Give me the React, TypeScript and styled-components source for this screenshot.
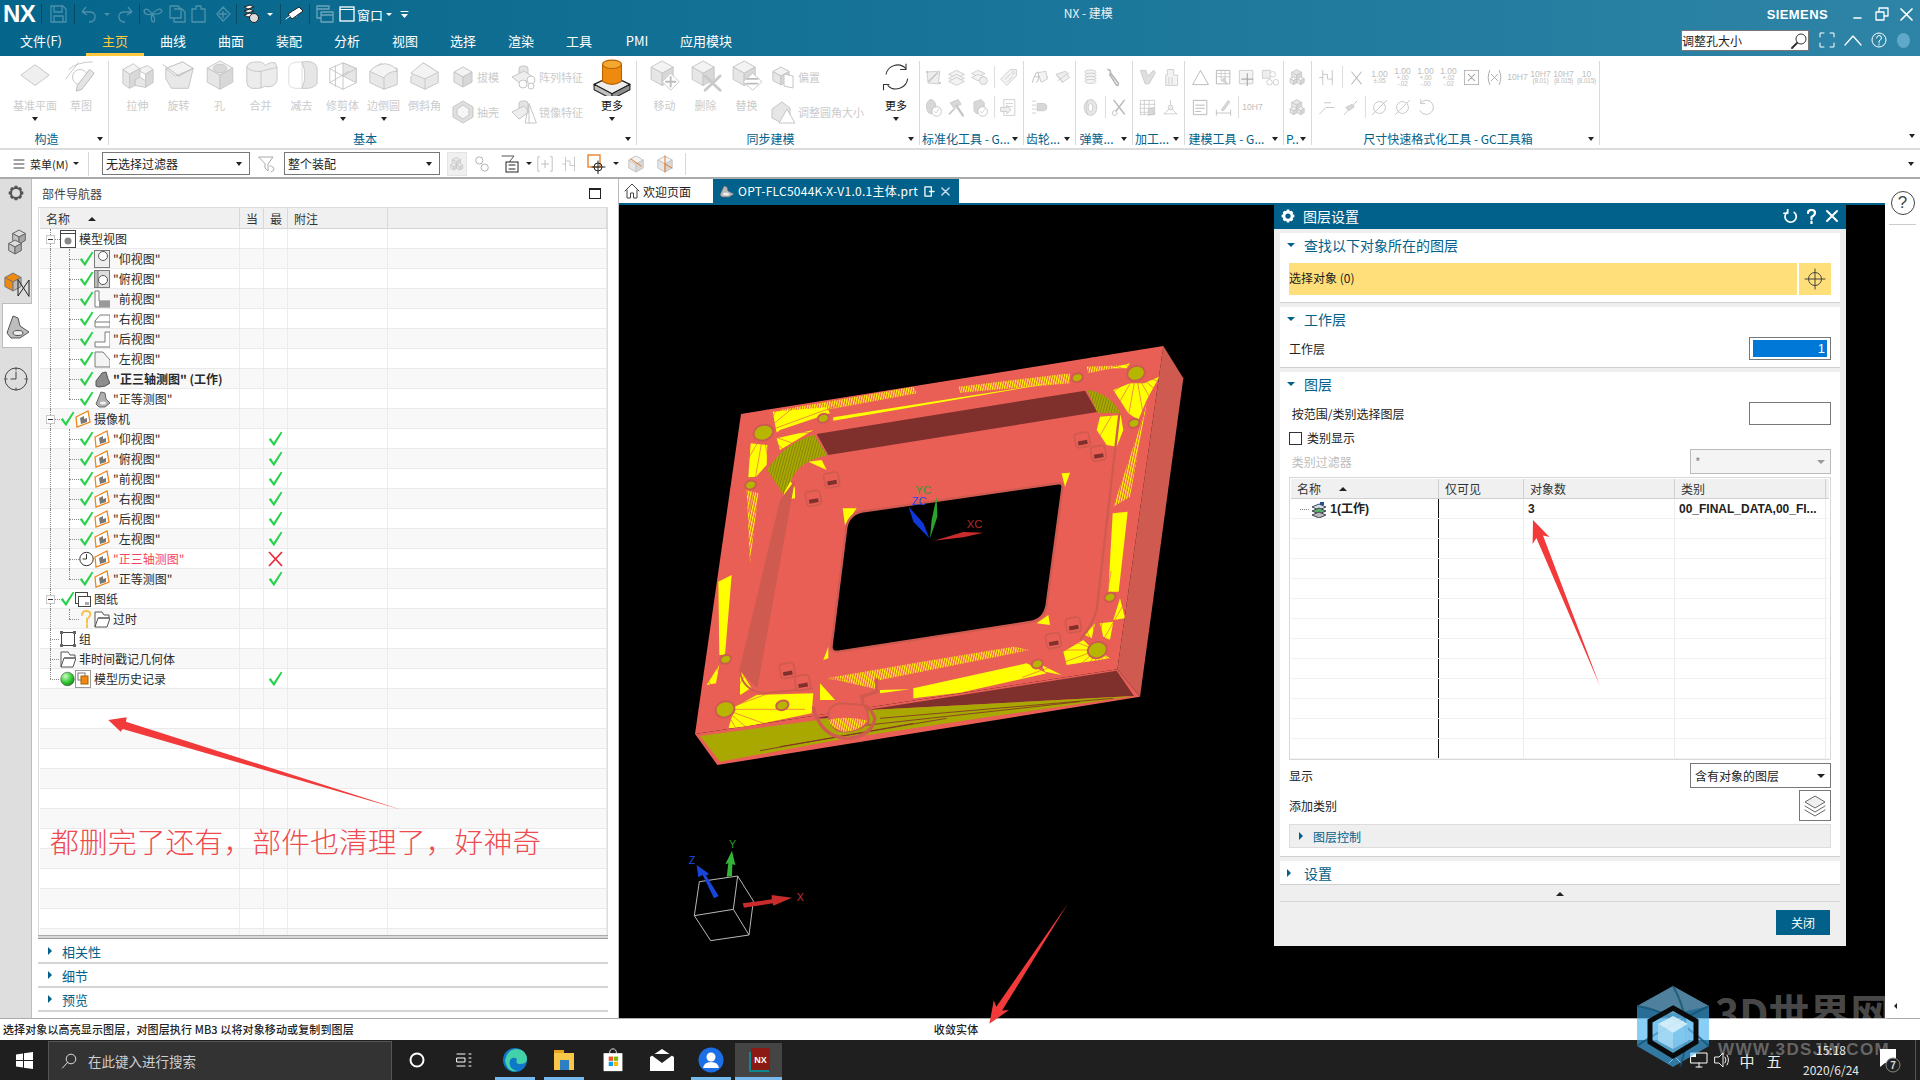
import React from "react";
import styled, { createGlobalStyle } from "styled-components";

const FONT = `"Noto Sans CJK SC", "Liberation Sans", sans-serif`;

const Global = createGlobalStyle`
  html, body { margin: 0; padding: 0; background: #fff; overflow: hidden; }
  * { box-sizing: border-box; }
  body { font-family: ${FONT}; font-size: 12px; color: #222; }
`;

/* ---------- shell ---------- */
const Page = styled.div`
  position: relative; width: 1920px; height: 1080px; overflow: hidden;
  display: flex; flex-direction: column; background: #fff;
`;
const Header = styled.header`
  height: 56px; display: flex; flex-direction: column; color: #fff;
  background: linear-gradient(90deg, #05658a 0%, #187599 50%, #2e84a6 100%);
`;
const TitleRow = styled.div`height: 28px; display: flex; align-items: center;`;
const Logo = styled.div`
  width: 41px; padding-left: 3px; font: 700 24px/28px "Liberation Sans", sans-serif; letter-spacing: -0.5px;
`;
const VSep = styled.span<{ $dark?: boolean; $h?: number }>`
  width: 1px; height: ${(p) => p.$h ?? 20}px; flex: none; background: ${(p) => (p.$dark ? "#d8d8d8" : "rgba(0,0,0,.28)")};
`;
const QBtn = styled.span<{ $w: number }>`
  width: ${(p) => p.$w}px; flex: none; display: flex; align-items: center; justify-content: center; font-size: 13px; color: #fff;
`;
const TitleText = styled.div`flex: 1; text-align: center; font-size: 12px; color: #e8f2f6; padding-bottom: 4px;`;
const Siemens = styled.div`
  font: 700 13px/28px "Liberation Sans", sans-serif; letter-spacing: .4px; margin-right: 18px; padding-top: 2px;
`;
const WinBtn = styled.span`width: 24px; display: flex; justify-content: center; align-items: center;`;
const TabRow = styled.nav`height: 28px; display: flex; align-items: stretch;`;
const FileTab = styled.div`width: 86px; padding-left: 20px; font-size: 13px; line-height: 26px;`;
const Tab = styled.div<{ $active?: boolean; $ml?: number }>`
  width: 58px; text-align: center; font-size: 13px; line-height: 26px; margin-left: ${(p) => p.$ml ?? 0}px;
  color: ${(p) => (p.$active ? "#ffc83d" : "#fff")};
  border-bottom: 3px solid ${(p) => (p.$active ? "#ffc83d" : "transparent")};
`;
const SearchBox = styled.div`
  margin: 2px 0 0 auto; width: 128px; height: 21px; background: #fff; border: 1px solid #777; color: #222;
  font-size: 12px; line-height: 19px; display: flex; justify-content: space-between; align-items: center;
`;
const HeadTools = styled.div`width: 111px; display: flex; align-items: center; padding-left: 7px; gap: 4px; margin-top: -4px;`;
const HeadTool = styled.span`width: 22px; display: flex; justify-content: center;`;
const Dot = styled.span`width: 13px; height: 15px; border-radius: 50%; background: #5ea9c8; margin-left: 3px;`;

/* ---------- ribbon ---------- */
const Ribbon = styled.section`height: 94px; padding-top: 5px; display: flex; border-bottom: 2px solid #dcdcdc; position: relative;`;
const Group = styled.div<{ $w: number }>`
  width: ${(p) => p.$w}px; height: 84px; flex: none; display: flex; flex-direction: column; border-right: 1px solid #dadada;
`;
const GroupBody = styled.div<{ $pad: number }>`flex: 1; display: flex; padding: 1px 0 0 ${(p) => p.$pad}px; min-height: 0;`;
const GroupLabel = styled.div`
  height: 18px; margin-bottom: -3px; padding: 0 5px 0 2px; display: flex; align-items: center; font-size: 12px; line-height: 18px; color: #01618a; white-space: nowrap;
`;
const LabelText = styled.span`flex: 1; min-width: 0; text-align: center; padding-right: 6px;`;
const Caret = styled.span<{ $up?: boolean; $c?: string; $s?: number }>`
  display: inline-block; flex: none; width: 0; height: 0;
  border-left: ${(p) => p.$s ?? 3.5}px solid transparent; border-right: ${(p) => p.$s ?? 3.5}px solid transparent;
  ${(p) => (p.$up ? "border-bottom" : "border-top")}: ${(p) => p.$s ?? 4}px solid ${(p) => p.$c ?? "#222"};
`;
const Big = styled.div<{ $w?: number; $dark?: boolean }>`
  width: ${(p) => p.$w ?? 41}px; flex: none; display: flex; flex-direction: column; align-items: center;
  font-size: 11px; line-height: 14px; color: ${(p) => (p.$dark ? "#111" : "#cbcbcb")}; white-space: nowrap;
`;
const BigIcon = styled.div`height: 30px; margin-bottom: 6px; display: flex; justify-content: center; align-items: center;`;
const BigCaret = styled.div`height: 14px; display: flex; align-items: center;`;
const SmallCol = styled.div<{ $w: number; $ml?: number }>`
  width: ${(p) => p.$w}px; flex: none; margin-left: ${(p) => p.$ml ?? 0}px; display: flex; flex-direction: column; gap: 5px;
`;
const SmallItem = styled.div`
  height: 30px; display: flex; align-items: center; gap: 2px; font-size: 11px; color: #cbcbcb; white-space: nowrap;
`;
const MiniGrid = styled.div`display: flex; flex-direction: column;`;
const MiniRow = styled.div`height: 30px; display: flex; align-items: center;`;
const MiniCell = styled.span`width: 23px; flex: none; display: flex; justify-content: center; align-items: center;`;
const MiniSep = styled.span`width: 6px; height: 22px; flex: none; display: flex; justify-content: center; &::after { content: ""; width: 1px; background: #ddd; }`;
const MiniText = styled.span`
  font: 8.5px/8px "Liberation Sans", sans-serif; color: #bdbdbd; text-align: center; white-space: nowrap; display: block; width: 23px;
`;
const MiniSub = styled.span`display: block; font-size: 6.5px; line-height: 6.5px; letter-spacing: -.2px;`;
const RibbonEnd = styled.div`margin-left: auto; align-self: flex-end; padding: 0 5px 7px 0;`;

/* ---------- toolbar ---------- */
const Toolbar = styled.div`
  height: 29px; flex: none; display: flex; align-items: center; border-bottom: 2px solid #aaa; padding-left: 13px; position: relative;
`;
const MenuBtn = styled.div`display: flex; align-items: center; gap: 5px; font-size: 11px; color: #222; width: 75px;`;
const ToolSelect = styled.div<{ $w: number }>`
  width: ${(p) => p.$w}px; height: 23px; border: 1px solid #777; display: flex; align-items: center; justify-content: space-between;
  padding: 0 7px 0 3px; font-size: 12px; color: #222; flex: none;
`;
const ToolIcon = styled.span<{ $w: number; $box?: boolean }>`
  width: ${(p) => p.$w}px; height: 24px; flex: none; display: flex; align-items: center; justify-content: center;
  ${(p) => p.$box && "background:#f0f0f0;border:1px solid #e4e4e4;"}
`;

/* ---------- main ---------- */
const Main = styled.main`flex: 1; display: flex; min-height: 0;`;
const Rail = styled.aside`
  width: 32px; flex: none; background: #dedede; border-right: 1px solid #bdbdbd; display: flex; flex-direction: column; align-items: center; padding-top: 2px;
`;
const RailBtn = styled.div<{ $h: number; $active?: boolean }>`
  height: ${(p) => p.$h}px; width: 100%; flex: none; display: flex; align-items: center; justify-content: center;
  ${(p) => p.$active && "background:#fff;border:1px solid #bdbdbd;border-right:0;margin:-2px -1px 0 2px;width:30px;"}
`;
const NavPanel = styled.section`width: 583px; flex: none; display: flex; flex-direction: column; background: #fff;`;
const NavTitle = styled.div`
  height: 28px; flex: none; display: flex; align-items: center; justify-content: space-between; padding: 0 14px 0 10px; font-size: 12px; color: #444;
`;
const MaxBox = styled.span`width: 12px; height: 11px; border: 1.5px solid #222; border-top-width: 2px;`;
const NavTable = styled.div`
  margin-left: 6px; width: 570px; height: 728px; flex: none; border: 1px solid #dcdcdc; border-bottom: 0; padding-left: 1px; overflow: hidden; background: #fff;
`;
const HeadRow = styled.div`
  height: 21px; display: flex; background: #f0f0f0; border-bottom: 1px solid #d6d6d6; font-size: 12px; color: #333;
`;
const HeadCell = styled.div<{ $w?: number }>`
  ${(p) => (p.$w ? `width:${p.$w}px;flex:none;` : "flex:1;")} border-right: 1px solid #d8d8d8; line-height: 20px; padding: 1px 0 0 6px;
  display: flex; align-items: center; gap: 18px;
`;
const Row = styled.div<{ $zebra: boolean }>`
  height: 20px; display: flex; border-bottom: 1px solid #eaeaea; background: ${(p) => (p.$zebra ? "#f8f8f8" : "#fff")};
`;
const Cell = styled.div<{ $w?: number }>`
  ${(p) => (p.$w ? `width:${p.$w}px;flex:none;` : "flex:1;")} border-right: 1px solid #ececec; display: flex; align-items: center; justify-content: center; height: 100%;
`;
const NameCell = styled.div<{ $pad: number }>`
  width: 200px; flex: none; height: 100%; border-right: 1px solid #ececec; position: relative; display: flex; align-items: center; padding-left: ${(p) => p.$pad}px;
`;
const NodeText = styled.span<{ $bold?: boolean; $red?: boolean }>`
  margin-left: 3px; font-size: 12px; line-height: 18px; white-space: nowrap; color: ${(p) => (p.$red ? "#f5455a" : "#2a2a2a")};
  font-weight: ${(p) => (p.$bold ? 700 : 400)};
`;
const VGuide = styled.span<{ $x: number; $half?: boolean }>`
  position: absolute; left: ${(p) => p.$x}px; top: 0; ${(p) => (p.$half ? "height:50%;" : "bottom:-1px;")} border-left: 1px dotted #8a8a8a;
`;
const HGuide = styled.span<{ $x: number; $w: number }>`
  position: absolute; left: ${(p) => p.$x}px; top: 50%; width: ${(p) => p.$w}px; border-top: 1px dotted #8a8a8a;
`;
const Expander = styled.span`
  position: absolute; left: 6px; top: 6px; width: 9px; height: 9px; background: #fff; border: 1px solid #c8c8c8;
  &::after { content: ""; position: absolute; left: 1px; top: 3px; width: 5px; height: 1px; background: #333; }
`;
const ThickLine = styled.div`margin: 0 0 1px 6px; width: 570px; height: 4px; flex: none; background: #d8d8d8; border-bottom: 1px solid #999; border-top: 1px solid #aaa;`;
const Fold = styled.div<{ $h: number }>`
  margin-left: 6px; width: 570px; height: ${(p) => p.$h}px; flex: none; display: flex; align-items: center; gap: 10px; padding-left: 10px;
  border-bottom: 2px solid #d4d4d4; font-size: 13px; color: #01618a;
`;
const RightCaret = styled.span`
  width: 0; height: 0; flex: none; border-top: 4px solid transparent; border-bottom: 4px solid transparent; border-left: 4px solid #01618a;
`;
const CenterPane = styled.section`
  width: 1267px; flex: none; position: relative; display: flex; flex-direction: column; margin-left: 3px; border-left: 1px solid #bcbcbc;
`;
const FileTabs = styled.div`height: 24px; flex: none; display: flex; background: #fff;`;
const Welcome = styled.div`width: 94px; display: flex; align-items: center; gap: 3px; padding-left: 5px; font-size: 12px; color: #222;`;
const PartTab = styled.div`
  width: 246px; background: #01618a; color: #fff; display: flex; align-items: center; gap: 3px; padding-left: 6px; font: 12px/24px ${FONT}; letter-spacing: .27px; white-space: nowrap;
`;
const TabGlyph = styled.span`margin-left: 3px; display: flex; flex: none;`;
const CanvasArea = styled.div`flex: 1; background: #000; border-top: 2px solid #01618a; position: relative; overflow: hidden;`;
const Drawing = styled.svg<{ $x: number; $y: number; $w: number; $h: number }>`
  position: absolute; left: ${(p) => p.$x}px; top: ${(p) => p.$y}px; width: ${(p) => p.$w}px; height: ${(p) => p.$h}px;
`;
const RightStrip = styled.aside`flex: 1; background: #fff; position: relative; display: flex; flex-direction: column; align-items: center; padding-top: 12px;`;
const HelpBtn = styled.div`
  width: 24px; height: 24px; border: 1.3px solid #444; border-radius: 50%; font: 17px/22px "Liberation Sans", sans-serif; text-align: center; color: #444;
`;
const HelpRule = styled.div`width: 27px; height: 1px; background: #ccc; margin-top: 9px;`;
const StripArrow = styled.span`
  position: absolute; left: 9px; bottom: 9px; width: 0; height: 0; border-top: 3px solid transparent; border-bottom: 3px solid transparent; border-right: 3px solid #222;
`;

/* ---------- dialog ---------- */
const Dialog = styled.div`
  position: absolute; left: 655px; top: 24px; width: 572px; height: 743px; background: #efefef; display: flex; flex-direction: column;
`;
const DlgTitle = styled.div`
  height: 26px; flex: none; background: #01618a; color: #fff; display: flex; align-items: center; padding: 0 7px; gap: 8px; font-size: 14px;
`;
const DlgTitleText = styled.span`flex: 1;`;
const DlgBody = styled.div`flex: 1; padding: 4px 6px 0; display: flex; flex-direction: column; gap: 4px;`;
const Section = styled.div<{ $h: number }>`
  height: ${(p) => p.$h}px; flex: none; background: #fff; border-bottom: 1.5px solid #d0d0d0; padding: 0 9px; display: flex; flex-direction: column;
`;
const SecHead = styled.div<{ $gap?: number }>`
  height: 26px; flex: none; display: flex; align-items: center; gap: ${(p) => p.$gap ?? 9}px; margin-left: -2px; padding-bottom: 2px; font-size: 14px; color: #01618a;
`;
const DlgLine = styled.div<{ $h: number; $mt?: number; $muted?: boolean }>`
  height: ${(p) => p.$h}px; flex: none; margin-top: ${(p) => p.$mt ?? 0}px; display: flex; align-items: center; justify-content: space-between;
  font-size: 12px; color: ${(p) => (p.$muted ? "#bdbdbd" : "#222")};
`;
const SelectBar = styled.div`
  margin-top: 4px; height: 32px; display: flex; gap: 2px; font-size: 12px; color: #222;
`;
const YellowLabel = styled.div`flex: 1; background: #fedf79; line-height: 30px;`;
const YellowBtn = styled.div`width: 32px; background: #fedf79; display: flex; align-items: center; justify-content: center;`;
const NumBox = styled.div<{ $sel?: boolean }>`
  width: 82px; height: 23px; border: 1px solid #777; padding: 2px 3px; background: #fff; display: flex;
`;
const NumFill = styled.div`
  flex: 1; background: #0078d7; color: #fff; text-align: right; padding-right: 2px; font: 13px/17px "Liberation Sans", sans-serif;
`;
const Check = styled.span`display: inline-block; width: 13px; height: 13px; border: 1px solid #333; background: #fff; margin-right: 5px; vertical-align: -2px;`;
const DropBox = styled.div<{ $off?: boolean }>`
  width: 141px; height: 25px; border: 1px solid ${(p) => (p.$off ? "#bbb" : "#777")}; background: ${(p) => (p.$off ? "#f4f4f4" : "#fff")};
  display: flex; align-items: center; justify-content: space-between; padding: 0 5px 0 4px; font-size: 12px; color: ${(p) => (p.$off ? "#888" : "#222")};
`;
const LayerBtn = styled.div`width: 32px; height: 31px; border: 1px solid #777; display: flex; align-items: center; justify-content: center;`;
const LayerTable = styled.div`
  margin-top: 3px; height: 283px; flex: none; border: 1px solid #d8d8d8; padding: 1px; overflow: hidden; background: #fff;
`;
const LHead = styled.div`height: 20px; display: flex; background: #f0f0f0; border-bottom: 1px solid #d0d0d0; font-size: 12px; color: #333;`;
const LHeadCell = styled.div<{ $w: number }>`
  width: ${(p) => p.$w}px; flex: none; border-right: 1px solid #d0d0d0; padding-left: 6px; line-height: 20px; display: flex; align-items: center; gap: 18px;
`;
const LRow = styled.div`height: 20px; display: flex; border-bottom: 1px solid #f2f2f2; font: 700 12px/19px "Liberation Sans", ${FONT}; color: #222;`;
const LCell = styled.div<{ $w: number; $black?: boolean }>`
  width: ${(p) => p.$w}px; flex: none; border-right: 1px solid ${(p) => (p.$black ? "#111" : "#ececec")}; padding: 2px 0 0 4px; white-space: nowrap; overflow: hidden; display: flex; align-items: center;
`;
const SubBar = styled.div`
  margin-top: 3px; height: 24px; flex: none; background: #efefef; border: 1px solid #dcdcdc; display: flex; align-items: center; gap: 10px; padding-left: 9px; font-size: 12px; color: #01618a;
`;
const FoldLine = styled.div`height: 16px; flex: none; display: flex; align-items: center; justify-content: center; border-bottom: 1.5px solid #d8d8d8; margin-top: -3px;`;
const DlgFoot = styled.div`display: flex; justify-content: flex-end; padding: 4px 10px 0 0;`;
const CloseBtn = styled.div`width: 54px; height: 25px; background: #01618a; color: #fff; font-size: 12px; line-height: 25px; text-align: center;`;
const GuideStub = styled.span`width: 9px; margin: 0 2px 0 5px; border-top: 1px dotted #888; flex: none;`;

/* ---------- bottom ---------- */
const StatusBar = styled.div`
  height: 22px; flex: none; border-top: 1px solid #aaa; display: flex; align-items: center; padding: 0 0 2px 3px; font-size: 11px; letter-spacing: .12px; color: #222; background: #fff; font-weight: 500;
`;
const StatusRight = styled.span`position: relative; left: 580px;`;
const Taskbar = styled.footer`height: 40px; flex: none; background: #1f1f1f; display: flex; align-items: stretch; color: #fff;`;
const StartBtn = styled.div`width: 48px; display: flex; align-items: center; justify-content: center;`;
const TaskSearch = styled.div`
  width: 344px; margin-top: 1px; background: #333; border: 1px solid #555; border-bottom: 0; display: flex; align-items: center; gap: 11px; padding-left: 12px; font-size: 13.5px; color: #cfcfcf;
`;
const TaskBtn = styled.div<{ $w: number; $on?: boolean; $lit?: boolean }>`
  width: ${(p) => p.$w}px; flex: none; display: flex; align-items: center; justify-content: center;
  border-bottom: 3px solid ${(p) => (p.$on ? "#76b9ed" : "transparent")}; border-top: 3px solid transparent; background: ${(p) => (p.$lit ? "#444" : "transparent")};
  background-clip: padding-box;
`;
const Tray = styled.div`margin-left: auto; display: flex; align-items: center;`;
const TrayBtn = styled.span<{ $w: number }>`width: ${(p) => p.$w}px; display: flex; justify-content: center; align-items: center; font-size: 15px; color: #eee;`;
const Clock = styled.div`width: 84px; text-align: center; font-size: 12px; line-height: 20px; color: #e6e6e6;`;
const NotifyBtn = styled.span`width: 42px; padding-right: 10px; display: flex; justify-content: center;`;
const DesktopEdge = styled.span`width: 5px; height: 100%; border-left: 1px solid #555;`;

/* ---------- overlays ---------- */
const Overlay = styled.svg`position: absolute; left: 0; top: 0; width: 1920px; height: 1080px; pointer-events: none;`;
const Note = styled.div`
  position: absolute; left: 50px; top: 821px; font-size: 28.8px; line-height: 40px; font-weight: 300; color: #ee4a50; white-space: nowrap; letter-spacing: .1px;
`;
const MarkText = styled.div`
  position: absolute; left: 1715px; top: 986px; font: 700 41px/50px ${FONT}; color: rgba(255, 255, 255, .3); white-space: nowrap; pointer-events: none;
`;
const MarkUrl = styled.div`
  position: absolute; left: 1718px; top: 1040px; font: 700 17px/20px "Liberation Sans", sans-serif; letter-spacing: 1.4px; color: rgba(255, 255, 255, .32); white-space: nowrap;
`;

/* ---------- svg helpers ---------- */
const Ic = styled.svg<{ $w: number; $h?: number }>`display: block; flex: none; width: ${(p) => p.$w}px; height: ${(p) => p.$h ?? p.$w}px;`;
const A = "#f3f3f3", B = "#e6e6e6", C = "#d8d8d8", L = "#c6c6c6";
const Poly = ({ p, f = B, s = L, w = 1 }: { p: string; f?: string; s?: string; w?: number }) => <polygon points={p} fill={f} stroke={s} strokeWidth={w} strokeLinejoin="round" />;
const Ln = ({ d, s = L, w = 1 }: { d: string; s?: string; w?: number }) => <path d={d} fill="none" stroke={s} strokeWidth={w} strokeLinecap="round" strokeLinejoin="round" />;
const Cube = ({ x, y, r, top = A, left = B, right = C, line = L }: { x: number; y: number; r: number; top?: string; left?: string; right?: string; line?: string }) => (
  <>
    <Poly p={`${x},${y - r} ${x + r * .9},${y - r / 2} ${x},${y} ${x - r * .9},${y - r / 2}`} f={top} s={line} />
    <Poly p={`${x - r * .9},${y - r / 2} ${x},${y} ${x},${y + r} ${x - r * .9},${y + r / 2}`} f={left} s={line} />
    <Poly p={`${x + r * .9},${y - r / 2} ${x},${y} ${x},${y + r} ${x + r * .9},${y + r / 2}`} f={right} s={line} />
  </>
);

const bigIcons: Record<string, React.ReactNode> = {
  plane: <Poly p="18,5 33,16 18,27 3,16" f="#efefef" />,
  sketch: <>
    <Ln d="M2 20 L15 3 M5 10 Q14 2 30 2" />
    <circle cx="17" cy="18" r="8" fill="#fff" stroke={L} />
    <Poly p="27,10 32,14 19,31 13,33 14,27" f="#e4e4e4" s="#b9b9b9" />
  </>,
  extrude: <>
    <Poly p="2,10 13,4 20,9 9,15" f={A} /><Poly p="20,9 28,6 34,10 26,15 20,12" f={A} />
    <Poly p="2,10 9,15 9,30 2,25" f={B} /><Poly p="9,15 20,9 20,18 15,21 15,27 9,30" f={C} />
    <Poly p="26,15 34,10 34,24 26,29" f={C} /><Poly p="15,21 20,18 26,22 26,29 15,27" f={B} />
  </>,
  revolve: <>
    <Poly p="4,9 22,2 33,9 28,30 10,30 4,20" f="#e8e8e8" />
    <Poly p="4,9 22,2 33,9 14,17" f={A} />
    <Ln d="M1 5 L18 17 M18 17 Q30 10 33 9" s="#bbb" />
  </>,
  hole: <>
    <Cube x={18} y={16} r={15} />
    <ellipse cx="18" cy="9" rx="7" ry="4.5" fill="#d9d9d9" stroke={L} />
  </>,
  unite: <>
    <path d="M3 8 Q3 2 14 2 Q21 2 23 6 Q26 2 33 3 Q35 6 35 10 L35 22 Q32 30 22 28 Q16 31 8 30 Q3 28 3 24 Z" fill="#ececec" stroke={L} />
    <Ln d="M3 8 Q8 13 18 12 Q25 10 35 8 M18 12 L18 30" />
  </>,
  subtract: <>
    <path d="M4 8 Q4 2 18 2 L18 30 Q6 31 4 26 Z" fill="#fff" stroke="#dcdcdc" />
    <path d="M18 2 Q32 0 34 8 L34 25 Q30 31 18 30 Q24 16 18 2 Z" fill="#e6e6e6" stroke={L} />
  </>,
  trim: <>
    <Poly p="4,9 18,3 32,9 32,24 18,31 4,24" f="#fff" />
    <Poly p="18,3 32,9 32,24 18,17" f="#e6e6e6" />
    <Ln d="M4 9 L18 17 L18 31 M18 17 L32 9 M10 6 L10 28 M4 24 L24 12" />
  </>,
  blend: <>
    <Poly p="3,12 14,4 32,9 32,26 18,31 3,24" f="#e8e8e8" />
    <path d="M3 12 Q10 4 20 4 Q30 6 32 12 Q22 12 18 19 Z" fill="#f4f4f4" stroke={L} />
    <Ln d="M18 19 L18 31" />
  </>,
  chamfer: <>
    <Poly p="3,18 16,3 32,13 32,24 18,31 3,24" f="#e8e8e8" />
    <Poly p="3,14 16,3 32,13 18,20" f="#f3f3f3" />
    <Ln d="M18 20 L18 31" />
  </>,
  move: <>
    <Cube x={15} y={14} r={13} />
    <Poly p="24,14 33,23 24,32 15,23" f="#fff" s="#c8c8c8" />
    <Ln d="M24 18 L24 28 M19 23 L29 23" s="#bdbdbd" w={2} />
  </>,
  del: <>
    <Cube x={15} y={14} r={13} />
    <Ln d="M17 17 L33 32 M33 17 L17 32" s="#c9c9c9" w={3} />
  </>,
  replace: <>
    <Cube x={15} y={14} r={13} />
    <Poly p="24,14 34,23 24,32 14,23" f="#fff" s="#c8c8c8" />
    <Ln d="M18 25 L29 25 M29 20 L18 20" s="#bdbdbd" w={2} />
  </>,
  more: <>
    <Poly p="18,17 35,25 18,34 1,25" f="#eeeeee" s="#222" w={1.2} />
    <Poly p="1,25 18,34 18,39 1,30" f="#bfbfbf" s="#222" />
    <Poly p="35,25 18,34 18,39 35,30" f="#8e8e8e" s="#222" />
    <path d="M9 6 L9 22 Q18 28 27 22 L27 6 Z" fill="#ef8a10" stroke="#b86200" />
    <ellipse cx="18" cy="6" rx="9" ry="4" fill="#f5a830" stroke="#b86200" />
  </>,
  sync: <>
    <path d="M6 15 A14 14 0 0 1 30 8" fill="none" stroke="#333" strokeWidth="1.3" />
    <path d="M32 20 A14 14 0 0 1 8 28" fill="none" stroke="#333" strokeWidth="1.3" />
    <path d="M30 2 V9 H23" fill="none" stroke="#333" strokeWidth="1.3" />
    <path d="M3 34 V27 H10" fill="none" stroke="#333" strokeWidth="1.3" />
  </>,
};
const BigI = ({ n, s = 34 }: { n: string; s?: number }) => <Ic $w={s} viewBox="0 0 36 36">{bigIcons[n]}</Ic>;

const miniIcons: Record<string, React.ReactNode> = {
  draft: <><Poly p="4,5 20,4 18,20 5,19" f="#eee" /><Ln d="M6 17 L17 6" w={2} /><circle cx="4" cy="5" r="1.5" fill="#ccc" /><circle cx="20" cy="19" r="1.5" fill="#ccc" /></>,
  layers: <><Poly p="12,3 22,8 12,13 2,8" f={A} /><Poly p="12,8 22,13 12,18 2,13" f={A} /><Poly p="12,12 22,17 12,22 2,17" f={A} /></>,
  layg: <><Poly p="10,3 19,7 10,11 2,7" f={A} /><Poly p="10,8 19,12 10,16 2,12" f={A} /><circle cx="17" cy="16" r="5" fill="#eee" stroke={L} /></>,
  tag: <><Poly p="14,2 22,2 22,10 10,22 2,14" f={A} /><circle cx="18" cy="6" r="1.5" fill="#fff" stroke={L} /><Ln d="M8 14 L14 8 M11 17 L17 11" /></>,
  spool: <><ellipse cx="9" cy="11" rx="6" ry="9" fill={C} stroke={L} /><circle cx="16" cy="17" r="6" fill="#fff" stroke="#bbb" /><Ln d="M13 17 L15 19 L19 14" /></>,
  hammer: <><Poly p="4,6 14,2 18,8 8,12" f={C} /><Ln d="M12 10 L20 22" w={3} /><Ln d="M3 20 L10 13" w={2} /></>,
  barrel: <><Poly p="5,5 14,2 18,6 18,16 8,20 5,16" f={C} /><circle cx="16" cy="17" r="6" fill="#fff" stroke="#bbb" /><Ln d="M13 17 L15 19 L19 14" /></>,
  sheet: <><Poly p="6,2 20,2 20,22 6,22" f="#fff" /><Ln d="M9 7 L17 7 M9 11 L17 11" /><Poly p="2,12 10,12 10,9 15,15 10,20 10,17 2,17" f="#eee" /></>,
  ribbon: <><Ln d="M3 18 Q8 2 11 6 Q11 18 8 18 M6 11 L22 11" w={1.3} /><Poly p="10,6 20,4 22,14 14,18" f={A} /></>,
  gear2: <><Poly p="4,8 16,4 21,12 12,18" f="#eee" /><Ln d="M6 16 L20 6 M4 8 L12 18" /></>,
  rack: <><Ln d="M3 4 H7 M3 9 H7 M3 14 H7 M3 19 H7" /><Poly p="9,7 18,7 21,9 21,14 18,16 9,16" f={C} /></>,
  coil: <><ellipse cx="12" cy="5" rx="7" ry="2.5" fill={A} stroke={L} /><ellipse cx="12" cy="9" rx="7" ry="2.5" fill={A} stroke={L} /><ellipse cx="12" cy="13" rx="7" ry="2.5" fill={A} stroke={L} /><ellipse cx="12" cy="17" rx="7" ry="2.5" fill={A} stroke={L} /></>,
  spring: <Ln d="M5 2 Q9 3 8 6 L18 19 Q19 22 16 22 L7 8" s="#b5b5b5" w={2} />,
  ring: <><ellipse cx="12" cy="12" rx="8" ry="10" fill={B} stroke={L} /><ellipse cx="12" cy="12" rx="3" ry="5" fill="#fff" stroke={L} /><Ln d="M8 3 Q5 12 8 21" /></>,
  scissor: <><Ln d="M5 3 L18 20 M18 3 L5 20" s="#bbb" w={2} /><circle cx="6" cy="19" r="3" fill="#fff" stroke="#bbb" /></>,
  mill: <><Poly p="3,3 10,3 12,10 20,3 22,6 14,20 9,20" f="#dedede" /></>,
  stack: <><Poly p="8,2 16,2 16,9 21,9 21,22 6,22 6,9 8,9" f={A} /><Ln d="M10 12 L10 20 M14 12 L14 20" /></>,
  table: <><Poly p="3,3 21,3 21,21 3,21" f="#fff" /><Ln d="M3 8 H21 M3 13 H21 M3 18 H21 M8 3 V21 M14 3 V21" /><Poly p="13,14 19,12 21,20 13,22" f={C} /></>,
  axis: <><Ln d="M12 3 V12 L4 20 M12 12 L20 20 M4 20 H20" /><circle cx="12" cy="12" r="3" fill="#eee" stroke={L} /></>,
  tri: <Poly p="12,3 22,21 2,21" f="#fff" s="#aaa" />,
  tablet: <><Poly p="3,3 20,3 20,20 3,20" f="#fff" s="#aaa" /><Ln d="M3 7 H20 M3 11 H20 M9 3 V15 M14 3 V15" /><Poly p="9,16 13,12 16,19" f={C} /></>,
  plus: <><Poly p="3,3 20,3 20,20 3,20" f="#f4f4f4" /><Ln d="M6 14 H20 M13 7 V22" s="#aaa" w={1.5} /></>,
  nodes: <><Poly p="3,3 13,3 13,13 3,13" f="#eee" /><circle cx="16" cy="8" r="3.5" fill="#fff" stroke={L} /><circle cx="12" cy="18" r="3.5" fill="#fff" stroke={L} /><circle cx="20" cy="18" r="3.5" fill="#fff" stroke={L} /></>,
  note: <><Poly p="3,3 20,3 20,21 3,21" f="#fff" s="#aaa" /><Ln d="M6 9 H17 M6 13 H17 M6 17 H12" s="#aaa" /></>,
  pen: <><Ln d="M3 15 V22 M21 15 V22 M3 19 H21" s="#bbb" /><Poly p="9,15 18,3 20,5 12,16" f={C} /></>,
  blocks: <><Cube x={11} y={9} r={7} top="#e6e6e6" /><Cube x={7} y={16} r={5} /><Cube x={16} y={16} r={5} /></>,
  dim1: <><Ln d="M6 3 V21 M18 3 V21 M6 8 H12 V14 H18 M2 12 H6" s="#bbb" /></>,
  cross: <Ln d="M6 5 L18 20 M18 5 L6 20" s="#bbb" w={1.3} />,
  boxX: <><rect x="3" y="3" width="18" height="18" fill="#fff" stroke="#aaa" /><Ln d="M8 8 L16 16 M16 8 L8 16" s="#aaa" w={1.3} /></>,
  parX: <><Ln d="M6 3 Q2 12 6 21 M18 3 Q22 12 18 21 M8 8 L16 16 M16 8 L8 16" s="#aaa" w={1.2} /></>,
  arrow: <><Ln d="M2 20 L10 12 H20 M8 6 H16" s="#bbb" /></>,
  slant: <><Ln d="M4 21 L20 4" s="#bbb" /><Poly p="6,12 14,8 17,11 10,16" f={C} /></>,
  dia: <><circle cx="12" cy="12" r="7.5" fill="#fff" stroke="#bbb" /><Ln d="M3 21 L21 3" s="#bbb" /></>,
  rot: <><Ln d="M6 6 A9 9 0 1 1 5 16 M6 2 V7 H11" s="#bbb" /></>,
};
const Mini = ({ n, s = 19 }: { n: string; s?: number }) => <Ic $w={s} viewBox="0 0 24 24">{miniIcons[n]}</Ic>;
const Mt = ({ t }: { t: string }) => {
  const [head, ...rest] = t.split("|");
  return <MiniText>{head}{rest.map((r) => <MiniSub key={r}>{r}</MiniSub>)}</MiniText>;
};
const Cells = ({ items }: { items: (string | null)[] }) => (
  <MiniRow>
    {items.map((n, i) =>
      n === null ? <MiniSep key={i} /> :
      n.startsWith("t:") ? <MiniCell key={i}><Mt t={n.slice(2)} /></MiniCell> :
      <MiniCell key={i}><Mini n={n} /></MiniCell>
    )}
  </MiniRow>
);

/* ---------- tree icons ---------- */
const Tick = ({ s = 15 }: { s?: number }) => (
  <Ic $w={s} $h={16} viewBox="0 0 15 16"><path d="M.8 8.5 L2.8 7 L5.6 11.6 L12.8 .8 L14.4 1.6 L6 15.2 Z" fill="#26d24a" /></Ic>
);
const Cross = () => <Ic $w={15} $h={16} viewBox="0 0 15 16"><path d="M1 1 L14 15 M14 1 L1 15" stroke="#ee2b3c" strokeWidth="1.8" /></Ic>;
const Tk = "#7a7a7a";
const treeIcons: Record<string, React.ReactNode> = {
  views: <><rect x=".5" y=".5" width="15" height="17" fill="#fff" stroke="#444" /><Ln d="M.5 3.5 H15.5" s="#444" /><circle cx="8" cy="11" r="3.5" fill="#888" /></>,
  bottom: <><rect x=".5" y=".5" width="15" height="17" fill="#eee" stroke={Tk} /><circle cx="9" cy="6" r="4.5" fill="#fff" stroke="#555" /></>,
  top: <><rect x=".5" y=".5" width="15" height="17" fill="#ddd" stroke={Tk} /><rect x=".5" y=".5" width="3.5" height="17" fill="#bbb" stroke={Tk} /><circle cx="9" cy="10" r="4.5" fill="#fff" stroke="#555" /></>,
  front: <><path d="M1 1 H5 V11 H16 V17 H1 Z" fill="#fff" stroke={Tk} /><path d="M5 11 H16 V17 H5 Z" fill="#999" /></>,
  right: <path d="M1 17 V11 L6 5 H16 V17 Z M1 12 H16" fill="#fff" stroke={Tk} />,
  back: <path d="M1 17 V12 H11 V2 H16 V17 Z" fill="#fff" stroke={Tk} />,
  left: <path d="M1 2 H9 L16 10 V17 H1 Z" fill="#f4f4f4" stroke={Tk} />,
  tri: <path d="M2 16 L2 11 L8 3 L12 2 L14 9 L16 13 Q12 17 5 17 Z" fill="#8d8d8d" stroke="#555" />,
  iso: <><path d="M2 14 L7 2 L11 3 L12 9 L16 13 L11 17 L5 17 Z" fill="#b0b0b0" stroke="#666" /><ellipse cx="9" cy="13" rx="3" ry="1.5" fill="#eee" /></>,
  cam: <><path d="M1 7 L13 1 L15 12 L2 17 Z" fill="#fff" stroke="#ef861b" strokeWidth="1.3" /><path d="M5 8 L9 6 L9 9 L12 8 L12 12 L6 14 Z" fill="#777" /></>,
  sheet: <><rect x=".5" y="2.5" width="12" height="11" fill="#fff" stroke="#444" /><rect x="3.5" y="6.5" width="12" height="10" fill="#fff" stroke="#444" /><rect x="10" y="12" width="4" height="3" fill="#aaa" /></>,
  folder: <path d="M1 17 V2 H8 L10 5 H15 V8 H4 L1 17 H13 L16 8 H4" fill="#fff" stroke="#555" />,
  group: <><rect x="1.5" y="2.5" width="13" height="13" fill="#fff" stroke="#444" /><rect x="0" y="1" width="3" height="3" fill="#666" /><rect x="13" y="1" width="3" height="3" fill="#666" /><rect x="0" y="14" width="3" height="3" fill="#666" /><rect x="13" y="14" width="3" height="3" fill="#666" /></>,
  hist: <><rect x=".5" y=".5" width="15" height="17" fill="#fff" stroke="#999" /><rect x="3" y="3" width="7" height="7" fill="#fff" stroke="#777" /><rect x="6" y="6" width="7" height="8" fill="#ef8a10" stroke="#a86000" /></>,
};
const TIcon = ({ n }: { n: string }) => <Ic $w={16} $h={18} viewBox="0 0 16 18">{treeIcons[n]}</Ic>;
const Ball = () => (
  <Ic $w={15} $h={16} viewBox="0 0 15 16">
    <defs><radialGradient id="gb" cx=".35" cy=".3" r=".8"><stop offset="0" stopColor="#c8ffc0" /><stop offset=".6" stopColor="#2fc52f" /><stop offset="1" stopColor="#0f7d1a" /></radialGradient></defs>
    <circle cx="7.5" cy="8" r="6.8" fill="url(#gb)" stroke="#333" strokeWidth=".5" />
  </Ic>
);
const ClockI = () => <Ic $w={15} $h={16} viewBox="0 0 15 16"><circle cx="7.5" cy="8" r="6.7" fill="#fff" stroke="#333" /><Ln d="M7.5 3.5 V8 H4" s="#333" /></Ic>;
const Quest = () => <Ic $w={15} $h={18} viewBox="0 0 15 18"><Ln d="M3 5 Q3 1 7.5 1 Q12 1 11 5.5 Q10 8 8 9 L8 13 M8 15 V17.5" s="#f8c34c" w={2} /></Ic>;

type NodeT = {
  lv: 0 | 1; st?: "tick" | "ball" | "clock" | "q"; ic: string; t: string; exp?: boolean; col?: "tick" | "x";
  bold?: boolean; red?: boolean; last?: boolean; lastRoot?: boolean;
};
const viewNames: [string, string][] = [["bottom", "仰视图"], ["top", "俯视图"], ["front", "前视图"], ["right", "右视图"], ["back", "后视图"], ["left", "左视图"], ["tri", "正三轴测图"], ["iso", "正等测图"]];
const nodes: NodeT[] = [
  { lv: 0, ic: "views", t: "模型视图", exp: true },
  ...viewNames.map(([ic, n], i): NodeT => ({ lv: 1, st: "tick", ic, t: i === 6 ? `"${n}" (工作)` : `"${n}"`, bold: i === 6, last: i === 7 })),
  { lv: 0, st: "tick", ic: "cam", t: "摄像机", exp: true },
  ...viewNames.map(([, n], i): NodeT => ({
    lv: 1, st: i === 6 ? "clock" : "tick", ic: "cam", t: `"${n}"`, col: i === 6 ? "x" : "tick", red: i === 6, last: i === 7,
  })),
  { lv: 0, st: "tick", ic: "sheet", t: "图纸", exp: true },
  { lv: 1, st: "q", ic: "folder", t: "过时", last: true },
  { lv: 0, ic: "group", t: "组" },
  { lv: 0, ic: "folder", t: "非时间戳记几何体" },
  { lv: 0, st: "ball", ic: "hist", t: "模型历史记录", col: "tick", lastRoot: true },
];
const status = (s?: NodeT["st"]) => s === "tick" ? <Tick /> : s === "ball" ? <Ball /> : s === "clock" ? <ClockI /> : s === "q" ? <Quest /> : null;

const NavRow = ({ n, i }: { n?: NodeT; i: number }) => (
  <Row $zebra={i % 2 === 1}>
    {n ? (
      <NameCell $pad={n.lv === 0 ? 20 : 39}>
        {!n.lastRoot ? <VGuide $x={10} /> : <VGuide $x={10} $half />}
        {n.lv === 0 && !n.exp && <HGuide $x={10} $w={9} />}
        {n.lv === 1 && <VGuide $x={29} $half={n.last} />}
        {n.lv === 1 && <HGuide $x={29} $w={10} />}
        {n.exp && <Expander />}
        {n.exp && <HGuide $x={15} $w={5} />}
        {status(n.st)}
        <TIcon n={n.ic} />
        <NodeText $bold={n.bold} $red={n.red}>{n.t}</NodeText>
      </NameCell>
    ) : <NameCell $pad={0} />}
    <Cell $w={24} />
    <Cell $w={24}>{n?.col === "tick" ? <Tick /> : n?.col === "x" ? <Cross /> : null}</Cell>
    <Cell $w={100} />
    <Cell />
  </Row>
);

/* ---------- the part ---------- */
const Sal = "#e95f56", Wall = "#cf5a4f", Dark = "#7f302c", Yel = "#ffff00", Oli = "#a8a800";
const pins: [number, number, number, number][] = [[250, 308, 30, 23], [430, 265, 17, 13], [212, 465, 17, 13], [1192, 143, 17, 13], [1368, 130, 27, 22], [1362, 280, 17, 13], [1290, 802, 17, 13], [1252, 960, 29, 24], [1072, 1002, 17, 13], [137, 988, 17, 13], [135, 1138, 29, 24], [307, 1126, 19, 14]];
const lugs: [number, number][] = [[455, 450], [400, 505], [1207, 330], [1255, 370], [1180, 885], [1120, 932], [322, 1022], [368, 1058]];
const rays = [0, 1, 2, 3, 4, 5, 6, 7, 8, 9, 10, 11, 12, 13, 14, 15, 16, 17];
const faceTop = "183,252 1450,48 1312,1018 45,1212";
const Part = () => (
  <Drawing $x={61} $y={125} $w={520} $h={450} viewBox="0 0 1560 1350">
    <defs>
      <pattern id="hy" width="7" height="7" patternUnits="userSpaceOnUse" patternTransform="rotate(12)"><rect width="3.5" height="7" fill={Yel} /></pattern>
      <pattern id="ho" width="8" height="8" patternUnits="userSpaceOnUse" patternTransform="rotate(15)"><rect width="8" height="8" fill={Oli} /><rect width="1.5" height="8" fill="#6f6a10" /></pattern>
      <clipPath id="face"><polygon points={faceTop} /></clipPath>
    </defs>
    <polygon points="1450,48 1510,145 1380,1100 1312,1018" fill={Wall} />
    <polygon points="45,1212 1312,1018 1380,1100 112,1305" fill={Sal} />
    <polygon points="400,1165 1310,1022 1362,1098 570,1140 445,1165" fill={Dark} />
    <polygon points="60,1218 415,1170 570,1140 1362,1098 1000,1150 500,1225 120,1295" fill={Oli} />
    <path d="M600 1165 L1300 1105 M520 1190 L1200 1115 M300 1250 L800 1165 M240 1262 L700 1180" stroke={Dark} strokeWidth="2.5" />
    <polygon points={faceTop} fill={Sal} />
    {/* yellow fans */}
    <g clipPath="url(#face)">
      <polygon points="278,245 440,232 450,250 300,300 290,308" fill={Yel} />
      <polygon points="460,262 1170,150 460,272" fill={Yel} />
      <polygon points="300,240 700,170 710,190 320,262" fill="url(#hy)" />
      <polygon points="835,170 1170,130 1170,160 840,188" fill="url(#hy)" />
      <polygon points="290,325 400,300 300,360" fill={Yel} />
      <polygon points="212,340 262,345 260,405 228,440 205,442" fill={Yel} />
      <polygon points="318,440 345,470 345,505 310,510" fill={Yel} />
      <polygon points="385,395 425,390 440,420" fill={Yel} />
      <polygon points="200,480 235,490 210,700" fill="url(#hy)" />
      <polygon points="1290,115 1350,100 1340,115" fill={Yel} />
      <polygon points="1300,180 1350,160 1392,160 1438,140 1400,210 1375,270 1345,250" fill={Yel} />
      <polygon points="1260,260 1322,255 1330,300 1310,350 1280,345 1250,300" fill={Yel} />
      <polygon points="1380,290 1400,220 1350,500 1300,530" fill="url(#hy)" />
      <polygon points="1220,110 1345,105 1225,130" fill="url(#hy)" />
      <polygon points="1298,550 1343,545 1316,785 1285,785" fill={Yel} />
      <polygon points="115,755 155,735 135,975 118,975" fill={Yel} />
      <polygon points="80,1065 118,1005 108,1060" fill={Yel} />
      <polygon points="180,1020 215,1075 180,1095" fill={Yel} />
      <polygon points="145,1195 165,1130 230,1095 400,1090 395,1150 200,1190" fill={Yel} />
      <polygon points="440,1048 590,1048 590,1078 470,1050" fill="url(#hy)" />
      <polygon points="420,1060 465,1110 420,1110" fill={Yel} />
      <polygon points="700,1075 1040,1000 1100,1030 840,1088 700,1105" fill={Yel} />
      <polygon points="600,1080 690,1078 600,1090" fill={Yel} />
      <polygon points="440,1045 700,1000 1000,950 1050,960 600,1050" fill="url(#hy)" />
      <polygon points="1150,965 1210,930 1225,945 1290,985 1160,1005" fill={Yel} />
      <polygon points="1215,915 1245,880 1235,925" fill={Yel} />
      <polygon points="1300,870 1320,805 1335,865" fill={Yel} />
      <polygon points="1260,880 1300,875 1290,930 1270,920" fill={Yel} />
      <polygon points="1085,1005 1145,1035 1095,1025" fill={Yel} />
      <polygon points="1145,430 1170,428 1155,470" fill={Yel} />
      <polygon points="488,535 530,535 495,585" fill={Yel} />
      <polygon points="1070,880 1105,855 1110,885" fill={Yel} />
      <polygon points="430,990 445,950 445,985" fill={Yel} />
      {[[250, 308], [1368, 130], [1252, 960], [135, 1138]].map(([x, y]) => rays.map((r) => (
        <line key={`${x}-${r}`} x1={x} y1={y} x2={x + 240 * Math.cos(r * .349)} y2={y + 240 * Math.sin(r * .349)} stroke={Sal} strokeWidth="2" />
      )))}
    </g>
    <polygon points="300,510 345,450 232,1075 178,1020" fill={Wall} />
    <path d="M1318 250 L1250 840 Q1240 880 1200 930" fill="none" stroke={Wall} strokeWidth="7" />
    <path d="M180 1020 Q185 1080 250 1090 L400 1075" fill="none" stroke={Wall} strokeWidth="6" />
    <polygon points="410,312 1215,182 1252,246 445,375" fill={Dark} />
    <path d="M262 420 Q310 340 402 314 L442 376 Q370 392 345 430 L310 492 Z" fill="url(#ho)" />
    <path d="M1222 180 Q1290 190 1322 250 L1252 248 Z" fill="url(#ho)" />
    {/* lower tab */}
    <path d="M400 1130 Q420 1220 500 1225 Q575 1220 585 1165 Q570 1130 550 1125 L545 1100 L590 1085 L590 1045" fill="none" stroke={Wall} strokeWidth="10" />
    <path d="M445 1150 Q450 1125 480 1120 L550 1125 Q570 1150 565 1180 Q520 1215 470 1200 Q445 1180 445 1150 Z" fill={Sal} stroke={Wall} strokeWidth="6" />
    <path d="M445 1170 Q500 1155 562 1172 Q540 1205 490 1205 Q455 1195 445 1170 Z" fill="url(#hy)" />
    {/* hole */}
    <path d="M545 545 L1135 460 Q1150 458 1147 475 L1100 825 Q1092 870 1050 876 L475 965 Q452 968 455 945 L498 600 Q502 555 545 545 Z" fill="#000" stroke={Wall} strokeWidth="7" />
    {lugs.map(([x, y], i) => (
      <g key={i} transform={`translate(${x} ${y}) rotate(-10)`}>
        <rect x="-22" y="-22" width="44" height="44" rx="10" fill={Sal} stroke={Wall} strokeWidth="5" />
        <rect x="-14" y="2" width="28" height="12" fill={Dark} />
      </g>
    ))}
    {pins.map(([x, y, a, b], i) => (
      <ellipse key={i} cx={x} cy={y} rx={a} ry={b} transform={`rotate(-18 ${x} ${y})`} fill="#b6b600" stroke={Wall} strokeWidth="6" />
    ))}
    {/* work coordinate system */}
    <polygon points="750,625 755,570 770,500 772,560" fill="#2aa52a" />
    <polygon points="748,625 700,575 686,530 730,580" fill="#1038d8" />
    <polygon points="762,632 850,606 910,608 850,622" fill="#c82c2c" />
    <text x="706" y="492" fontSize="34" fill="#2f9a2f" fontFamily="Liberation Sans">YC</text>
    <text x="695" y="525" fontSize="34" fill="#1a4cf0" fontFamily="Liberation Sans">ZC</text>
    <text x="860" y="594" fontSize="34" fill="#b52b2b" fontFamily="Liberation Sans">XC</text>
  </Drawing>
);
const Triad = () => (
  <Drawing $x={51} $y={615} $w={160} $h={130} viewBox="0 0 480 390">
    <path d="M88 185 L203 168 L190 268 L73 287 Z M203 168 L250 243 L237 345 L122 362 L73 287 M190 268 L237 345" fill="none" stroke="#b8b8b8" strokeWidth="3" />
    <polygon points="170,170 175,130 166,133 186,92 196,135 187,133 186,168" fill="#35b23a" />
    <polygon points="146,228 132,235 98,165 85,172 80,135 118,162 108,166" fill="#1746d8" />
    <polygon points="218,250 305,238 305,225 366,233 310,257 308,250 222,263" fill="#c82c2c" />
    <text x="380" y="242" fontSize="32" fill="#c83434" fontFamily="Liberation Sans">X</text>
    <text x="177" y="84" fontSize="32" fill="#2f9a2f" fontFamily="Liberation Sans">Y</text>
    <text x="56" y="132" fontSize="32" fill="#1a4cf0" fontFamily="Liberation Sans">Z</text>
  </Drawing>
);

/* ---------- dialog ---------- */
const Tri = () => <Caret $c="#01618a" $s={4} />;
const LayerDialog = () => (
  <Dialog>
    <DlgTitle>
      <Ic $w={14} viewBox="0 0 24 24"><path d="M10 1h4l1 3 3-1 3 3-1 3 3 1v4l-3 1 1 3-3 3-3-1-1 3h-4l-1-3-3 1-3-3 1-3-3-1v-4l3-1-1-3 3-3 3 1z" fill="#fff" /><circle cx="12" cy="12" r="4.5" fill="#01618a" /></Ic>
      <DlgTitleText>图层设置</DlgTitleText>
      <Ic $w={15} viewBox="0 0 16 16"><Ln d="M12 3.5 A6 6 0 1 1 5 3 M5 .5 V4.5 H1" s="#fff" w={1.8} /></Ic>
      <Ic $w={11} $h={15} viewBox="0 0 11 15"><Ln d="M2 4 Q2 1 5.5 1 Q9 1 9 4 Q9 6 5.5 8 V10 M5.5 12.5 V14.5" s="#fff" w={2.2} /></Ic>
      <Ic $w={14} viewBox="0 0 14 14"><Ln d="M2 2 L12 12 M12 2 L2 12" s="#fff" w={2} /></Ic>
    </DlgTitle>
    <DlgBody>
      <Section $h={70}>
        <SecHead><Tri />查找以下对象所在的图层</SecHead>
        <SelectBar>
          <YellowLabel>选择对象 (0)</YellowLabel>
          <YellowBtn>
            <Ic $w={22} viewBox="0 0 22 22"><circle cx="11" cy="11" r="6.5" fill="none" stroke="#444" /><Ln d="M11 1 V21 M1 11 H21" s="#444" /></Ic>
          </YellowBtn>
        </SelectBar>
      </Section>
      <Section $h={61}>
        <SecHead><Tri />工作层</SecHead>
        <DlgLine $h={23} $mt={4}>工作层<NumBox $sel><NumFill>1</NumFill></NumBox></DlgLine>
      </Section>
      <Section $h={485}>
        <SecHead><Tri />图层</SecHead>
        <DlgLine $h={23} $mt={4}><span>&nbsp;按范围/类别选择图层</span><NumBox /></DlgLine>
        <DlgLine $h={24}><span><Check />类别显示</span></DlgLine>
        <DlgLine $h={25} $muted>
          <span>&nbsp;类别过滤器</span>
          <DropBox $off>*<Caret $c="#999" $s={4} /></DropBox>
        </DlgLine>
        <LayerTable>
          <LHead>
            <LHeadCell $w={148}>名称<Caret $up $s={4} /></LHeadCell>
            <LHeadCell $w={85}>仅可见</LHeadCell>
            <LHeadCell $w={151}>对象数</LHeadCell>
            <LHeadCell $w={151}>类别</LHeadCell>
          </LHead>
          {Array.from({ length: 14 }).map((_, i) => (
            <LRow key={i}>
              <LCell $w={148} $black>
                {i === 0 && <>
                  <GuideStub />
                  <Ic $w={16} $h={18} viewBox="0 0 16 18">
                    <Poly p="8,3 15,6 8,9 1,6" f="#cfe0e8" s="#445" /><Poly p="8,7 15,10 8,13 1,10" f="#5bb36a" s="#445" /><Poly p="8,11 15,14 8,17 1,14" f="#b9b9b9" s="#445" /><rect x="9" y="1" width="4" height="3" fill="#2b4d99" />
                  </Ic>
                  &nbsp;1(工作)
                </>}
              </LCell>
              <LCell $w={85} />
              <LCell $w={151}>{i === 0 && "3"}</LCell>
              <LCell $w={151}>{i === 0 && "00_FINAL_DATA,00_FI..."}</LCell>
            </LRow>
          ))}
        </LayerTable>
        <DlgLine $h={25} $mt={3}>显示<DropBox>含有对象的图层<Caret $s={4} /></DropBox></DlgLine>
        <DlgLine $h={31} $mt={2}>添加类别
          <LayerBtn><Ic $w={24} viewBox="0 0 24 24"><Poly p="12,2 22,8 12,14 2,8" f="#f0f0f0" s="#666" /><Ln d="M2 12 L12 18 L22 12 M2 16 L12 22 L22 16" s="#666" /></Ic></LayerBtn>
        </DlgLine>
        <SubBar><RightCaret />图层控制</SubBar>
      </Section>
      <Section $h={24}>
        <SecHead $gap={13}><RightCaret />设置</SecHead>
      </Section>
      <FoldLine><Caret $up $s={4} /></FoldLine>
      <DlgFoot><CloseBtn>关闭</CloseBtn></DlgFoot>
    </DlgBody>
  </Dialog>
);

/* ---------- app ---------- */
const Disabled = "rgba(255,255,255,.28)";
const QI = ({ d, c = Disabled, w = 22 }: { d: string; c?: string; w?: number }) => (
  <Ic $w={w} $h={20} viewBox="0 0 22 20"><path d={d} fill="none" stroke={c} strokeWidth="1.3" strokeLinejoin="round" /></Ic>
);

export default function App() {
  return (
    <Page>
      <Global />
      <Header>
        <TitleRow>
          <Logo>NX</Logo>
          <VSep />
          <QBtn $w={32}><QI d="M4 2 H16 L19 5 V18 H4 Z M7 2 V8 H15 V2 M7 18 V12 H16 V18" /></QBtn>
          <VSep />
          <QBtn $w={26}><QI d="M5 8 L9 3 M5 8 L10 11 M5 8 H14 Q19 9 18 14 Q17 18 12 18" /></QBtn>
          <QBtn $w={12}><Caret $c={Disabled} $s={3} /></QBtn>
          <QBtn $w={26}><QI d="M17 8 L13 3 M17 8 L12 11 M17 8 H8 Q3 9 4 14 Q5 18 10 18" /></QBtn>
          <VSep />
          <QBtn $w={26}><QI d="M10 10 Q4 2 2 7 Q3 12 10 10 Q18 2 20 7 Q18 11 10 10 Q8 18 12 18 Q14 15 10 10" /></QBtn>
          <QBtn $w={22}><QI d="M4 2 H12 L15 5 V14 H4 Z M8 5 H16 L19 8 V18 H8 V14" /></QBtn>
          <QBtn $w={22}><QI d="M4 5 H8 V2 H13 V5 H17 V18 H4 Z" /></QBtn>
          <QBtn $w={26}><QI d="M5 10 L11 3 L18 10 L11 17 Z M11 7 V14 M7 10 H15" /></QBtn>
          <VSep />
          <QBtn $w={28}>
            <Ic $w={20} viewBox="0 0 20 20"><Poly p="3,3 9,1 13,3 7,5" f="#fff" s="#222" /><Poly p="3,7 9,5 13,7 7,9" f="#e4e4e4" s="#222" /><Poly p="3,11 9,9 13,11 7,13" f="#fff" s="#222" /><circle cx="13" cy="14" r="4.5" fill="#ddd" stroke="#222" /></Ic>
          </QBtn>
          <QBtn $w={10}><Caret $c="#fff" $s={3} /></QBtn>
          <QBtn $w={5} />
          <VSep />
          <QBtn $w={28}><Ic $w={20} viewBox="0 0 20 20"><Poly p="3,10 14,3 18,7 7,15" f="#fff" s="#222" /><Ln d="M8 8 L11 12 M1 15 L5 12" s="#fff" /></Ic></QBtn>
          <VSep />
          <QBtn $w={28}><QI d="M4 2 H16 V5 H4 Z M4 5 V14 H8 M8 8 H20 V18 H8 Z M8 11 H20" c="rgba(255,255,255,.4)" /></QBtn>
          <QBtn $w={18}><Ic $w={16} viewBox="0 0 16 16"><rect x="1" y="1" width="14" height="14" fill="none" stroke="#fff" strokeWidth="1.3" /><Ln d="M1 3.5 H15" s="#fff" /></Ic></QBtn>
          <QBtn $w={28}>窗口</QBtn>
          <QBtn $w={10}><Caret $c="#fff" $s={3} /></QBtn>
          <QBtn $w={4} />
          <QBtn $w={12}><Ic $w={9} viewBox="0 0 9 9"><Ln d="M1 1.5 H8" s="#fff" /><polygon points="1,4 8,4 4.5,8" fill="#fff" /></Ic></QBtn>
          <TitleText>NX - 建模</TitleText>
          <Siemens>SIEMENS</Siemens>
          <WinBtn><Ic $w={10} viewBox="0 0 10 10"><Ln d="M1 9 H8" s="#fff" w={1.6} /></Ic></WinBtn>
          <WinBtn><Ic $w={14} viewBox="0 0 14 14"><Ln d="M1 5 H9 V13 H1 Z M4 5 V1 H13 V9 H9" s="#fff" w={1.3} /></Ic></WinBtn>
          <WinBtn><Ic $w={13} viewBox="0 0 13 13"><Ln d="M1 1 L12 12 M12 1 L1 12" s="#fff" w={1.7} /></Ic></WinBtn>
          <QBtn $w={2} />
        </TitleRow>
        <TabRow>
          <FileTab>文件(F)</FileTab>
          <Tab $active>主页</Tab>
          {["曲线", "曲面", "装配", "分析", "视图", "选择", "渲染", "工具", "PMI"].map((t) => <Tab key={t}>{t}</Tab>)}
          <Tab $ml={11}>应用模块</Tab>
          <SearchBox>调整孔大小
            <Ic $w={18} viewBox="0 0 18 18"><circle cx="11" cy="7" r="5" fill="#fff" stroke="#333" /><Ln d="M7 11 L2 16" s="#333" w={2} /></Ic>
          </SearchBox>
          <HeadTools>
            <HeadTool><Ic $w={16} viewBox="0 0 16 16"><Ln d="M1 5 V1 H5 M11 1 H15 V5 M1 11 V15 H5 M11 15 H15 V11" s="#fff" /></Ic></HeadTool>
            <HeadTool><Ic $w={18} viewBox="0 0 18 12"><Ln d="M1 11 L9 2 L17 11" s="#fff" w={1.3} /></Ic></HeadTool>
            <HeadTool><Ic $w={16} viewBox="0 0 16 16"><circle cx="8" cy="8" r="7" fill="none" stroke="#fff" /><Ln d="M5.5 6 Q6 3.5 8 3.5 Q10.5 3.5 10.5 6 Q10 8 8 9 V10.5 M8 12 V13" s="#fff" /></Ic></HeadTool>
            <Dot />
          </HeadTools>
        </TabRow>
      </Header>

      <Ribbon>
        <Group $w={109}>
          <GroupBody $pad={12}>
            <Big $w={46}><BigIcon><BigI n="plane" /></BigIcon>基准平面<BigCaret><Caret /></BigCaret></Big>
            <Big $w={46}><BigIcon><BigI n="sketch" /></BigIcon>草图</Big>
          </GroupBody>
          <GroupLabel><LabelText>构造</LabelText><Caret /></GroupLabel>
        </Group>
        <Group $w={528}>
          <GroupBody $pad={8}>
            <Big><BigIcon><BigI n="extrude" /></BigIcon>拉伸</Big>
            <Big><BigIcon><BigI n="revolve" /></BigIcon>旋转</Big>
            <Big><BigIcon><BigI n="hole" /></BigIcon>孔</Big>
            <Big><BigIcon><BigI n="unite" /></BigIcon>合并</Big>
            <Big><BigIcon><BigI n="subtract" /></BigIcon>减去</Big>
            <Big><BigIcon><BigI n="trim" /></BigIcon>修剪体<BigCaret><Caret /></BigCaret></Big>
            <Big><BigIcon><BigI n="blend" /></BigIcon>边倒圆<BigCaret><Caret /></BigCaret></Big>
            <Big><BigIcon><BigI n="chamfer" /></BigIcon>倒斜角</Big>
            <SmallCol $w={60} $ml={6}>
              <SmallItem><Ic $w={24} viewBox="0 0 24 24"><Cube x={12} y={12} r={10} /></Ic>拔模</SmallItem>
              <SmallItem><Ic $w={24} viewBox="0 0 24 24"><Poly p="12,1 22,7 22,17 12,23 2,17 2,7" f="#e0e0e0" /><Poly p="12,5 18,9 18,15 12,19 6,15 6,9" f="#f6f6f6" /></Ic>抽壳</SmallItem>
            </SmallCol>
            <SmallCol $w={80}>
              <SmallItem><Ic $w={26} viewBox="0 0 26 24"><rect x="8" y="1" width="9" height="13" rx="3" fill="#e4e4e4" stroke={L} /><Poly p="1,12 13,6 22,12 10,19" f="#eee" /><circle cx="12" cy="19" r="4" fill="#fff" stroke={L} /><circle cx="20" cy="15" r="4" fill="#fff" stroke={L} /><circle cx="20" cy="21" r="3" fill="#fff" stroke={L} /></Ic>阵列特征</SmallItem>
              <SmallItem><Ic $w={26} viewBox="0 0 26 24"><rect x="8" y="1" width="9" height="12" rx="3" fill="#e4e4e4" stroke={L} /><Poly p="1,12 13,6 18,12 8,19" f="#eee" /><Ln d="M18 4 L14 23 H25 Z M18 4 V23" /></Ic>镜像特征</SmallItem>
            </SmallCol>
            <Big $w={42} $dark><BigIcon><BigI n="more" s={38} /></BigIcon>更多<BigCaret><Caret /></BigCaret></Big>
          </GroupBody>
          <GroupLabel><LabelText>基本</LabelText><Caret /></GroupLabel>
        </Group>
        <Group $w={283}>
          <GroupBody $pad={7}>
            <Big><BigIcon><BigI n="move" /></BigIcon>移动</Big>
            <Big><BigIcon><BigI n="del" /></BigIcon>删除</Big>
            <Big><BigIcon><BigI n="replace" /></BigIcon>替换</Big>
            <SmallCol $w={105} $ml={3}>
              <SmallItem><Ic $w={26} viewBox="0 0 26 24"><Cube x={11} y={11} r={9} /><Poly p="14,9 23,11 23,23 14,21" f="#fff" /></Ic>偏置</SmallItem>
              <SmallItem><Ic $w={26} viewBox="0 0 26 24"><Poly p="2,9 12,2 20,8 20,17 10,22 2,18" f="#e6e6e6" /><Poly p="17,9 25,23 9,23" f="#fff" /></Ic>调整圆角大小</SmallItem>
            </SmallCol>
            <Big $w={42} $dark><BigIcon><BigI n="sync" s={30} /></BigIcon>更多<BigCaret><Caret /></BigCaret></Big>
          </GroupBody>
          <GroupLabel><LabelText>同步建模</LabelText><Caret /></GroupLabel>
        </Group>
        <Group $w={104}>
          <GroupBody $pad={2}>
            <MiniGrid>
              <Cells items={["draft", "layers", "layg", null, "tag"]} />
              <Cells items={["spool", "hammer", "barrel", null, "sheet"]} />
            </MiniGrid>
          </GroupBody>
          <GroupLabel><LabelText>标准化工具 - G...</LabelText><Caret /></GroupLabel>
        </Group>
        <Group $w={52}>
          <GroupBody $pad={4}><MiniGrid><Cells items={["ribbon", "gear2"]} /><Cells items={["rack"]} /></MiniGrid></GroupBody>
          <GroupLabel><LabelText>齿轮...</LabelText><Caret /></GroupLabel>
        </Group>
        <Group $w={57}>
          <GroupBody $pad={3}><MiniGrid><Cells items={["coil", "spring"]} /><Cells items={["ring", null, "scissor"]} /></MiniGrid></GroupBody>
          <GroupLabel><LabelText>弹簧...</LabelText><Caret /></GroupLabel>
        </Group>
        <Group $w={52}>
          <GroupBody $pad={3}><MiniGrid><Cells items={["mill", "stack"]} /><Cells items={["table", "axis"]} /></MiniGrid></GroupBody>
          <GroupLabel><LabelText>加工...</LabelText><Caret /></GroupLabel>
        </Group>
        <Group $w={99}>
          <GroupBody $pad={4}><MiniGrid><Cells items={["tri", "tablet", "plus", "nodes"]} /><Cells items={["note", "pen", null, "t:10H7"]} /></MiniGrid></GroupBody>
          <GroupLabel><LabelText>建模工具 - G...</LabelText><Caret /></GroupLabel>
        </Group>
        <Group $w={28}>
          <GroupBody $pad={2}><MiniGrid><Cells items={["blocks"]} /><Cells items={["blocks"]} /></MiniGrid></GroupBody>
          <GroupLabel><LabelText>P..</LabelText><Caret /></GroupLabel>
        </Group>
        <Group $w={288}>
          <GroupBody $pad={4}>
            <MiniGrid>
              <Cells items={["dim1", null, "cross", "t:1.00|±.05", "t:1.00|+.00|-.02", "t:1.00|+.00|-.00", "t:1.00|+.02|-.02", "boxX", "parX", "t:10H7", "t:10H7|(8.01)", "t:10H7|(8.015)", "t:10|(8.015)"]} />
              <Cells items={["arrow", "slant", null, "dia", "dia", "rot"]} />
            </MiniGrid>
          </GroupBody>
          <GroupLabel><LabelText>尺寸快速格式化工具 - GC工具箱</LabelText><Caret /></GroupLabel>
        </Group>
        <RibbonEnd><Caret /></RibbonEnd>
      </Ribbon>

      <Toolbar>
        <MenuBtn>
          <Ic $w={12} viewBox="0 0 12 12"><Ln d="M1 2 H11 M1 6 H11 M1 10 H11" s="#444" /></Ic>
          <span>菜单(M)</span>
          <Caret $s={3} />
        </MenuBtn>
        <VSep $dark $h={24} />
        <ToolIcon $w={13} />
        <ToolSelect $w={148}>无选择过滤器<Caret /></ToolSelect>
        <ToolIcon $w={34}><Ic $w={20} viewBox="0 0 20 20"><Ln d="M2 3 H16 L11 10 V17 L8 14 V10 Z M13 12 Q17 12 17 16 L14 18" s="#aaa" /></Ic></ToolIcon>
        <ToolSelect $w={156}>整个装配<Caret /></ToolSelect>
        <ToolIcon $w={7} />
        <ToolIcon $w={20} $box><Mini n="blocks" s={16} /></ToolIcon>
        <ToolIcon $w={30}><Ic $w={18} viewBox="0 0 20 20"><circle cx="7" cy="6" r="4" fill="none" stroke="#aaa" /><circle cx="13" cy="14" r="4" fill="none" stroke="#aaa" /></Ic></ToolIcon>
        <ToolIcon $w={26}><Ic $w={20} viewBox="0 0 20 20"><Ln d="M2 2 H14 L10 7 V12" s="#555" /><rect x="6" y="8" width="12" height="10" fill="#fff" stroke="#222" /><Ln d="M9 11 H15 M9 15 H15" s="#222" /></Ic></ToolIcon>
        <ToolIcon $w={11}><Caret $s={3} /></ToolIcon>
        <ToolIcon $w={22}><Ic $w={18} viewBox="0 0 20 20"><Ln d="M4 2 H2 V18 H4 M16 2 H18 V18 H16 M6 10 H14 M10 6 V14" s="#bbb" /></Ic></ToolIcon>
        <ToolIcon $w={28}><Mini n="dim1" s={18} /></ToolIcon>
        <ToolIcon $w={26}>
          <Ic $w={20} viewBox="0 0 20 20"><rect x="1" y="1" width="12" height="12" fill="none" stroke="#e8791c" strokeWidth="1.3" /><circle cx="11" cy="13" r="4" fill="none" stroke="#222" /><Ln d="M11 7 V20 M5 13 H18" s="#222" /></Ic>
        </ToolIcon>
        <ToolIcon $w={11}><Caret $s={3} /></ToolIcon>
        <ToolIcon $w={30}><Ic $w={20} viewBox="0 0 20 20"><Cube x={10} y={10} r={8} /><Ln d="M5 5 L15 12" s="#e8791c" /></Ic></ToolIcon>
        <ToolIcon $w={28}><Ic $w={20} viewBox="0 0 20 20"><Cube x={10} y={10} r={8} /><Ln d="M10 2 V18 M10 10 L17 14" s="#e8791c" /></Ic></ToolIcon>
        <ToolIcon $w={6} />
        <VSep $dark $h={22} />
        <RibbonEnd />
        <ToolIcon $w={18}><Caret /></ToolIcon>
      </Toolbar>

      <Main>
        <Rail>
          <RailBtn $h={24}><Ic $w={16} viewBox="0 0 24 24"><path d="M10 1h4l1 3 3-1 3 3-1 3 3 1v4l-3 1 1 3-3 3-3-1-1 3h-4l-1-3-3 1-3-3 1-3-3-1v-4l3-1-1-3 3-3 3 1z" fill="#555" /><circle cx="12" cy="12" r="6" fill="#dedede" /></Ic></RailBtn>
          <RailBtn $h={16} />
          <RailBtn $h={42}><Ic $w={26} viewBox="0 0 26 26"><Cube x={16} y={8} r={7} top="#dcdcdc" left="#c4c4c4" right="#a8a8a8" line="#666" /><Cube x={12} y={18} r={7} top="#dcdcdc" left="#c4c4c4" right="#a8a8a8" line="#666" /></Ic></RailBtn>
          <RailBtn $h={42}><Ic $w={28} viewBox="0 0 28 28"><Cube x={11} y={12} r={9} top="#ef8a10" left="#ef8a10" right="#bbb" line="#777" /><Ln d="M16 10 V26 L27 10 V26 Z" s="#222" /></Ic></RailBtn>
          <RailBtn $h={45} $active><Ic $w={26} viewBox="0 0 26 26"><path d="M2 20 L8 3 L13 5 L15 13 L24 19 L15 25 L6 25 Z" fill="#bdbdbd" stroke="#555" /><ellipse cx="13" cy="20" rx="5" ry="2.5" fill="#efefef" stroke="#555" /></Ic></RailBtn>
          <RailBtn $h={16} />
          <RailBtn $h={30}><Ic $w={24} viewBox="0 0 24 24"><circle cx="12" cy="12" r="11" fill="none" stroke="#444" /><Ln d="M12 5 V12 H7 M12 1 V3 M12 21 V23 M1 12 H3 M21 12 H23" s="#444" /></Ic></RailBtn>
        </Rail>
        <NavPanel>
          <NavTitle>部件导航器<MaxBox /></NavTitle>
          <NavTable>
            <HeadRow>
              <HeadCell $w={200}>名称<Caret $up $s={4} /></HeadCell>
              <HeadCell $w={24}>当</HeadCell>
              <HeadCell $w={24}>最</HeadCell>
              <HeadCell $w={100}>附注</HeadCell>
              <HeadCell />
            </HeadRow>
            {Array.from({ length: 36 }).map((_, i) => <NavRow key={i} n={nodes[i]} i={i} />)}
          </NavTable>
          <ThickLine />
          <Fold $h={24}><RightCaret />相关性</Fold>
          <Fold $h={24}><RightCaret />细节</Fold>
          <Fold $h={24}><RightCaret />预览</Fold>
        </NavPanel>
        <CenterPane>
          <FileTabs>
            <Welcome>
              <Ic $w={16} viewBox="0 0 16 16"><Ln d="M1 8 L8 1 L15 8 M3 7 V15 H6.5 V10 H9.5 V15 H13 V7" s="#444" /></Ic>
              欢迎页面
            </Welcome>
            <PartTab>
              <Ic $w={16} viewBox="0 0 16 16"><path d="M1 12 L5 3 L8 4 L9 8 L15 11 L10 14 L3 14 Z" fill="#b8b8b8" stroke="#666" strokeWidth=".6" /><ellipse cx="7" cy="11" rx="3" ry="1.5" fill="#eee" /></Ic>
              OPT-FLC5044K-X-V1.0.1主体.prt
              <TabGlyph><Ic $w={11} viewBox="0 0 12 12"><Ln d="M1 1 H8 V11 H1 Z M6 6 H11" s="#fff" w={1.4} /></Ic></TabGlyph>
              <TabGlyph><Ic $w={9} viewBox="0 0 10 10"><Ln d="M1 1 L9 9 M9 1 L1 9" s="#cde" w={1.6} /></Ic></TabGlyph>
            </PartTab>
          </FileTabs>
          <CanvasArea>
            <Part />
            <Triad />
          </CanvasArea>
          <LayerDialog />
        </CenterPane>
        <RightStrip>
          <HelpBtn>?</HelpBtn>
          <HelpRule />
          <StripArrow />
        </RightStrip>
      </Main>

      <StatusBar>
        选择对象以高亮显示图层，对图层执行 MB3 以将对象移动或复制到图层
        <StatusRight>收敛实体</StatusRight>
      </StatusBar>

      <Taskbar>
        <StartBtn><Ic $w={17} viewBox="0 0 17 17"><path d="M0 2.5 L7 1.5 V8 H0 Z M8 1.3 L17 0 V8 H8 Z M0 9 H7 V15.5 L0 14.5 Z M8 9 H17 V17 L8 15.7 Z" fill="#fff" /></Ic></StartBtn>
        <TaskSearch>
          <Ic $w={16} viewBox="0 0 16 16"><circle cx="10" cy="6" r="4.8" fill="none" stroke="#ddd" /><Ln d="M6.5 9.5 L1.5 15" s="#ddd" /></Ic>
          在此键入进行搜索
        </TaskSearch>
        <TaskBtn $w={49}><Ic $w={16} viewBox="0 0 16 16"><circle cx="8" cy="8" r="6.5" fill="none" stroke="#fff" strokeWidth="2" /></Ic></TaskBtn>
        <TaskBtn $w={46}><Ic $w={16} viewBox="0 0 16 16"><Ln d="M1 2 H9 M1 14 H9 M1 6 H9 V10 H1 Z M13 2 H15 M13 6 H15 M13 10 H15 M13 14 H15" s="#fff" /></Ic></TaskBtn>
        <TaskBtn $w={8} />
        <TaskBtn $w={40} $on><Ic $w={26} viewBox="0 0 26 26"><circle cx="13" cy="13" r="12" fill="#0f78c8" /><path d="M3 14 Q5 2 15 2 Q25 3 25 13 Q24 17 18 17 Q13 17 15 12 Q11 9 8 13 Q6 22 15 24 Q6 26 3 14 Z" fill="#42d1a8" /></Ic></TaskBtn>
        <TaskBtn $w={9} />
        <TaskBtn $w={40} $on><Ic $w={24} viewBox="0 0 24 24"><rect x="2" y="2" width="10" height="5" fill="#e8a61f" /><rect x="2" y="5" width="20" height="17" fill="#f8c74a" /><rect x="8" y="12" width="9" height="10" fill="#2d7fc1" /></Ic></TaskBtn>
        <TaskBtn $w={9} />
        <TaskBtn $w={40}><Ic $w={24} viewBox="0 0 24 28"><Ln d="M8 6 Q8 1 12 1 Q16 1 16 6" s="#fff" /><rect x="1" y="6" width="22" height="21" fill="#fff" /><rect x="7" y="10" width="5" height="5" fill="#f05423" /><rect x="13" y="10" width="5" height="5" fill="#7db900" /><rect x="7" y="16" width="5" height="5" fill="#00a4ef" /><rect x="13" y="16" width="5" height="5" fill="#ffb900" /></Ic></TaskBtn>
        <TaskBtn $w={9} />
        <TaskBtn $w={40}><Ic $w={24} viewBox="0 0 24 24"><polygon points="0,9 12,1 24,9 24,23 0,23" fill="#fff" /><polygon points="0,6 24,6 12,15" fill="#222" /></Ic></TaskBtn>
        <TaskBtn $w={9} />
        <TaskBtn $w={40} $on><Ic $w={26} viewBox="0 0 26 26"><circle cx="13" cy="13" r="12.5" fill="#1d6fe6" /><circle cx="13" cy="10" r="4.5" fill="#fff" /><path d="M5 21 Q6 15 13 15 Q20 15 21 21 Z" fill="#fff" /></Ic></TaskBtn>
        <TaskBtn $w={4} />
        <TaskBtn $w={47} $on $lit>
          <Ic $w={26} viewBox="0 0 26 26">
            <rect x="3" y="5" width="20" height="20" fill="#0e8a8e" /><rect x="5" y="1" width="19" height="22" fill="#8b1a14" />
            <text x="14.5" y="16" textAnchor="middle" fontSize="9" fontWeight="700" fill="#fff" fontFamily="Liberation Sans">NX</text>
          </Ic>
        </TaskBtn>
        <Tray>
          <TrayBtn $w={24}><Ic $w={14} viewBox="0 0 14 10"><Ln d="M1 8 L7 2 L13 8" s="#ddd" /></Ic></TrayBtn>
          <TrayBtn $w={24}><Ic $w={18} viewBox="0 0 18 18"><Ln d="M1 2 H17 V12 H1 Z M6 16 H12 M9 12 V16" s="#fff" /><rect x="1" y="2" width="5" height="4" fill="#fff" /></Ic></TrayBtn>
          <TrayBtn $w={24}><Ic $w={18} viewBox="0 0 18 18"><Ln d="M1 6 H5 L9 2 V16 L5 12 H1 Z M11 6 Q13 9 11 12 M13 4 Q16 9 13 14" s="#eee" /></Ic></TrayBtn>
          <TrayBtn $w={24}>中</TrayBtn>
          <TrayBtn $w={30}>五</TrayBtn>
          <Clock>15:18<br />2020/6/24</Clock>
          <NotifyBtn>
            <Ic $w={24} $h={26} viewBox="0 0 24 26">
              <path d="M3 2 H19 V16 H8 L3 20 Z" fill="#fff" />
              <circle cx="16" cy="18" r="7" fill="#222" stroke="#888" />
              <text x="16" y="22" textAnchor="middle" fontSize="10" fontWeight="700" fill="#ddd" fontFamily="Liberation Sans">7</text>
            </Ic>
          </NotifyBtn>
          <DesktopEdge />
        </Tray>
      </Taskbar>

      <Note>都删完了还有，部件也清理了，好神奇</Note>
      <Overlay viewBox="0 0 1920 1080">
        <polygon points="108.3,720 126.7,717.3 126,721.7 402.3,810 122.7,729 120.7,731.7" fill="#f23a3a" />
        <polygon points="1533,520 1549.5,537 1543,535.4 1600,686 1536.4,538 1532.6,544" fill="#f23a3a" />
        <polygon points="989.4,1023.7 993.8,1000.3 996.3,1006.7 1067.8,903.7 1002.1,1010.5 1009,1010.1" fill="#f23a3a" />
        <polygon points="1673,986 1709,1006 1709,1046 1673,1067 1637,1046 1637,1006" fill="#3fb0f0" opacity=".62" />
        <polygon points="1673,986 1709,1006 1673,1014 1637,1006" fill="#b8b8b8" opacity=".28" />
        <path d="M1673 986 Q1695 1025 1680 1067 M1637 1006 Q1670 1010 1709 1046 M1709 1006 Q1660 1030 1637 1046" stroke="#12506f" strokeWidth="2" fill="none" opacity=".7" />
        <polygon points="1673,1008 1696,1021 1696,1042 1673,1056 1650,1042 1650,1021" fill="#6ebeeb" fillOpacity=".55" stroke="#0a0a0a" strokeWidth="5" />
        <polygon points="1673,1016 1688,1024 1673,1033 1658,1024" fill="#d8effb" opacity=".9" />
        <polygon points="1658,1024 1673,1033 1673,1049 1658,1041" fill="#a6d8f3" opacity=".9" />
        <polygon points="1688,1024 1673,1033 1673,1049 1688,1041" fill="#7fc6ee" opacity=".9" />
      </Overlay>
      <MarkText>3D世界网</MarkText>
      <MarkUrl>WWW.3DSJW.COM</MarkUrl>
    </Page>
  );
}
